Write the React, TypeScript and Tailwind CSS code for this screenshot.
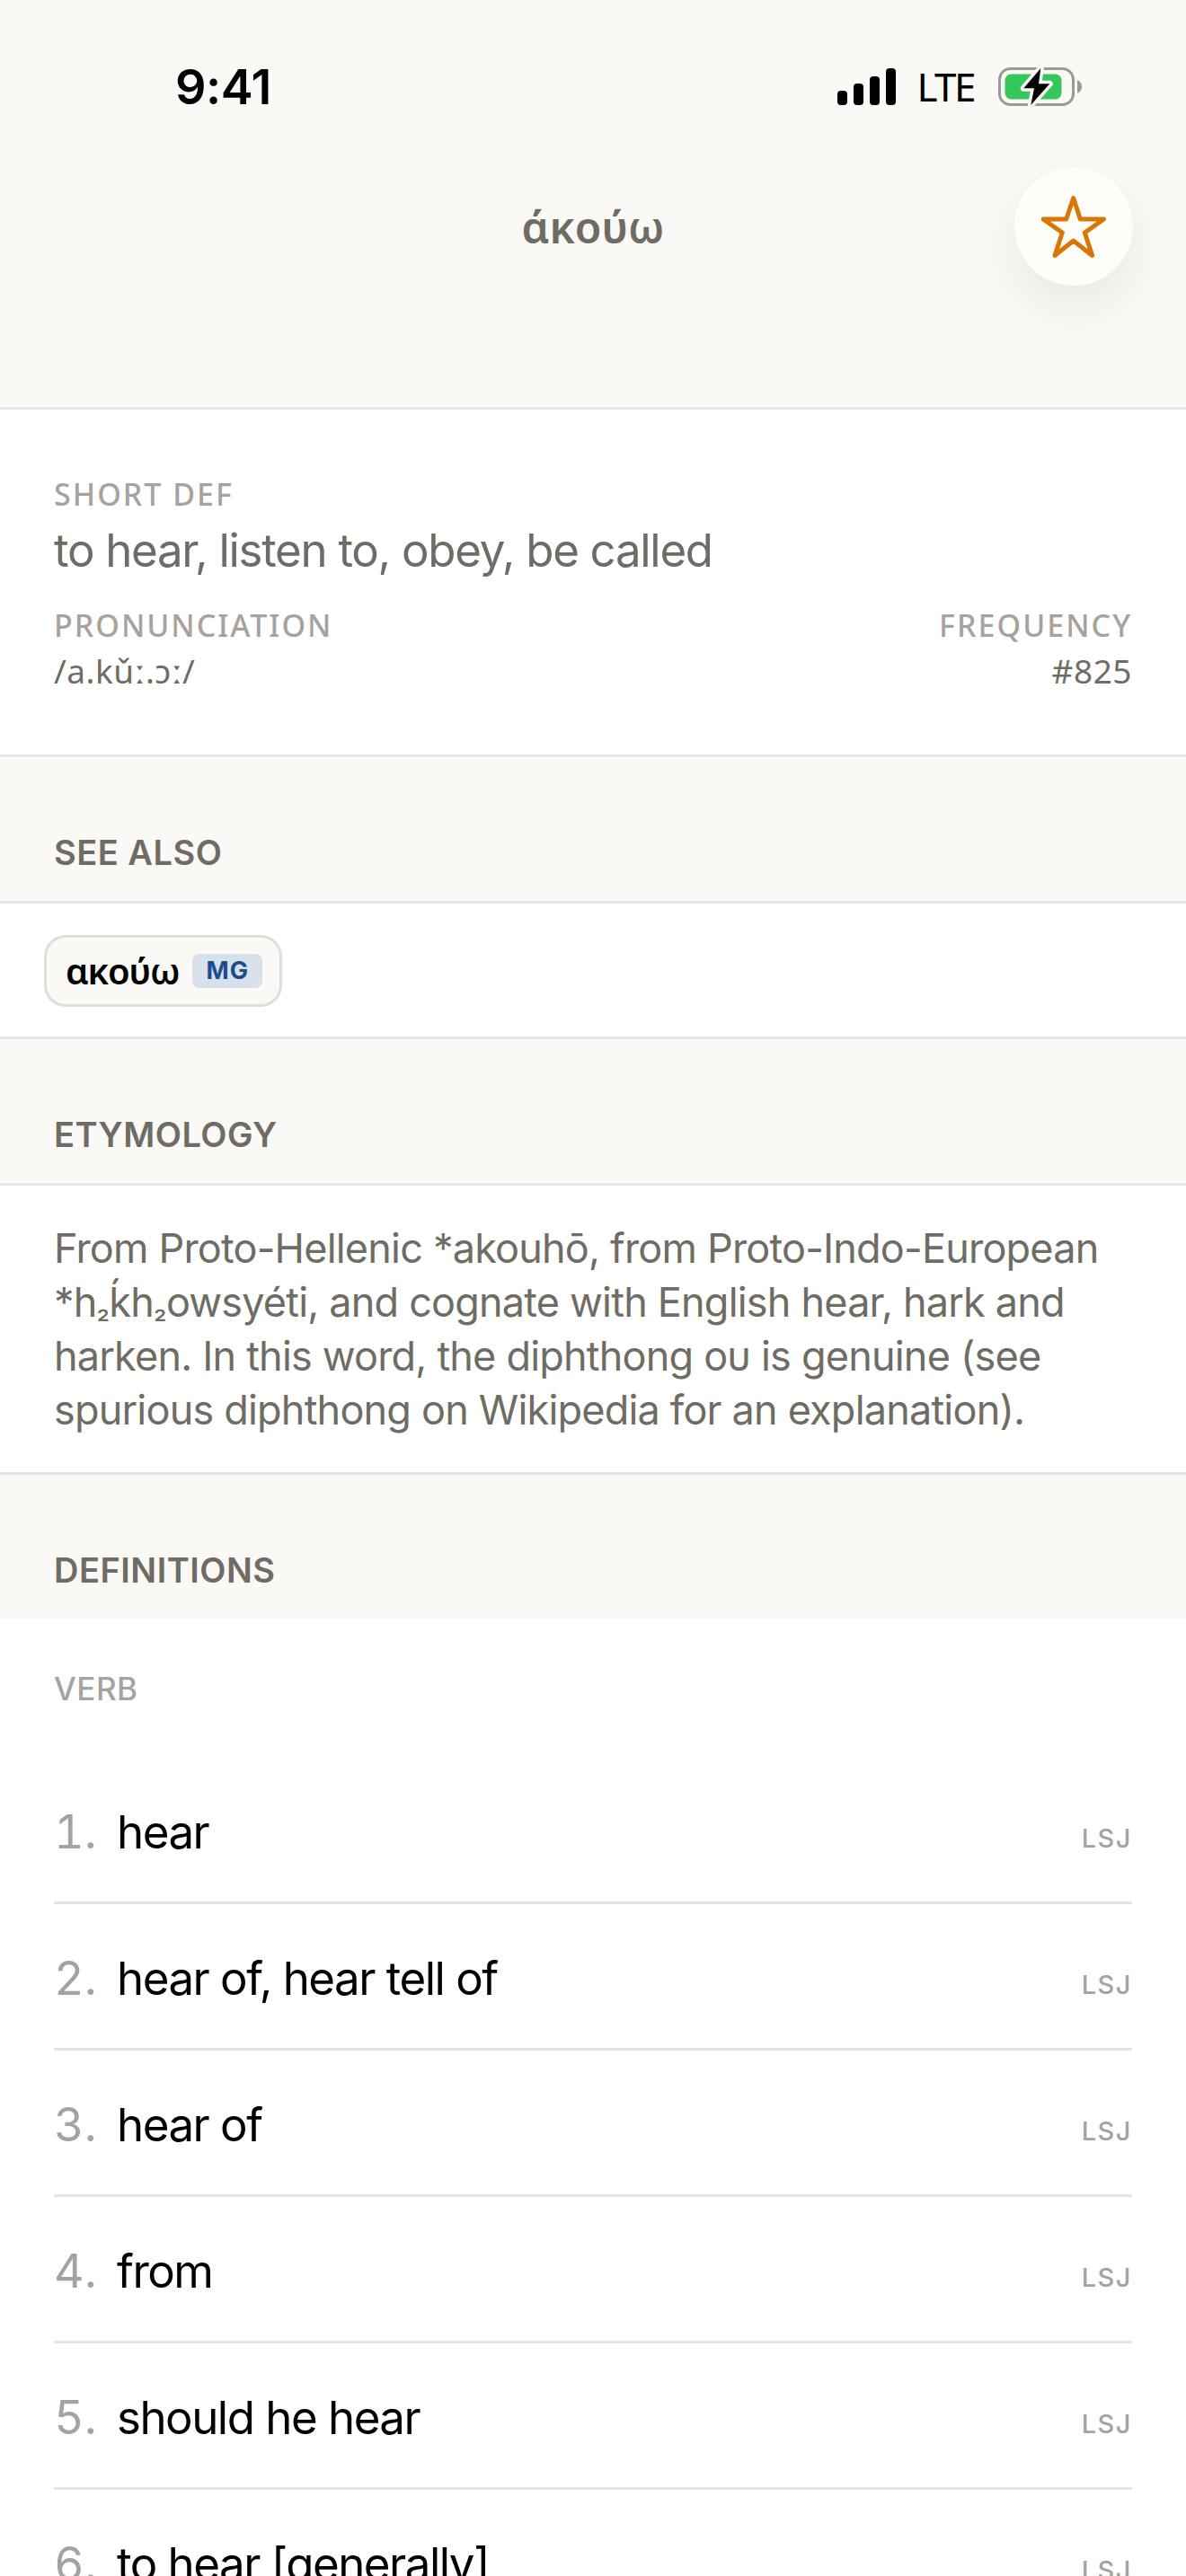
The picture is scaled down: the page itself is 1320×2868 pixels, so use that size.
import React from 'react';

const senses = ['hear', 'hear of, hear tell of', 'hear of', 'from', 'should he hear', 'to hear [generally]'];

const SignalIcon = () => (
  <svg width="65" height="41" viewBox="0 0 65 41" fill="#000">
    <rect x="0" y="25" width="11" height="16" rx="4" />
    <rect x="18" y="17" width="11" height="24" rx="4" />
    <rect x="36" y="9" width="11" height="32" rx="4" />
    <rect x="54" y="0" width="11" height="41" rx="4" />
  </svg>
);

const BatteryIcon = () => (
  <svg width="93" height="43" viewBox="0 0 93 43" fill="none">
    <rect x="1.5" y="1.5" width="82" height="40" rx="12" stroke="#9a9a98" strokeWidth="3" />
    <rect x="7.5" y="7.5" width="63" height="28" rx="7" fill="#34c759" />
    <path d="M88 14.5c3 .5 5 3 5 7s-2 6.5-5 7z" fill="#9a9a98" />
    <path
      d="M47.3 1 28.3 23.3H40L36.3 42 57.3 18.3H45z"
      stroke="#faf9f6"
      strokeWidth="7"
      strokeLinejoin="round"
      style={{ paintOrder: 'stroke' }}
      fill="#000"
    />
  </svg>
);

const StarIcon = () => (
  <svg width="72" height="69" viewBox="0 0 72 69" fill="none">
    <path
      d="M35.7 2.5 43.3 26H69.5L48.3 41 56.7 66.5 35.7 50 15 66.5 23.3 41 2 26H27.7z"
      stroke="#d97706"
      strokeWidth="5"
      strokeLinejoin="round"
    />
  </svg>
);

const SectionHeader = ({ title }: { title: string }) => (
  <div className="bg-[#faf9f6] px-[60px] pt-[83px] pb-[31px] text-[38px] leading-[46px] font-semibold tracking-[0.5px] text-[#6f6b65]">
    {title}
  </div>
);

const Label = ({ children }: { children: React.ReactNode }) => (
  <div className="text-[34px] leading-[44px] font-medium tracking-[2px] text-[#a8a29e] font-['Noto_Sans',sans-serif]">{children}</div>
);

const SubValue = ({ children }: { children: React.ReactNode }) => (
  <div className="mt-[4px] text-[37px] leading-[50px] tracking-[0.5px] text-[#6f6b65] font-['Noto_Sans',sans-serif]">{children}</div>
);

const Sub2 = () => <span className="text-[33px] leading-none">₂</span>;

export default function App() {
  return (
    <div className="w-[1320px] h-[2868px] overflow-hidden bg-white font-['Inter',sans-serif]">
      {/* Nav header */}
      <header className="relative h-[456px] bg-[#faf9f6] border-b-[3px] border-[#e7e5e4]">
        <div className="flex items-center justify-between pt-[75px] pl-[195px] pr-[116px]">
          <span className="text-[54px] leading-[43px] font-semibold tracking-[-0.5px] text-black">9:41</span>
          <div className="flex items-center">
            <SignalIcon />
            <span className="ml-[23px] mr-[27px] text-[44px] leading-[43px] tracking-[-2.5px] text-black font-['Noto_Sans',sans-serif]">LTE</span>
            <BatteryIcon />
          </div>
        </div>
        <h1 className="mt-[103px] text-center text-[48px] leading-[64px] font-semibold text-[#6f6b65] font-['Noto_Sans',sans-serif]">
          άκούω
        </h1>
        <button className="absolute left-[1129px] top-[186px] flex h-[132px] w-[132px] items-center justify-center rounded-full bg-[#fdfdfa] shadow-[0_24px_60px_rgba(0,0,0,0.07)]">
          <StarIcon />
        </button>
      </header>

      {/* Summary */}
      <section className="h-[387px] border-b-[3px] border-[#e7e5e4] px-[60px] pt-[72px]">
        <Label>SHORT DEF</Label>
        <div className="mt-[10px] text-[51px] leading-[62px] tracking-[-1.3px] text-[#6f6b65]">to hear, listen to, obey, be called</div>
        <div className="mt-[30px] flex justify-between">
          <div>
            <Label>PRONUNCIATION</Label>
            <SubValue>/a.kǔː.ɔː/</SubValue>
          </div>
          <div className="text-right">
            <Label>FREQUENCY</Label>
            <SubValue>#825</SubValue>
          </div>
        </div>
      </section>

      <SectionHeader title="SEE ALSO" />
      <section className="h-[154px] border-y-[3px] border-[#e7e5e4] px-[49px] pt-[35px]">
        <div className="inline-flex h-[80px] w-[265px] items-center gap-[15px] rounded-[24px] border-[3px] border-[#e0deda] bg-[#faf9f6] pl-[21px]">
          <span className="text-[40px] leading-[56px] font-semibold tracking-[-1.2px] text-black font-['Noto_Sans',sans-serif]">ακούω</span>
          <span className="rounded-[8px] bg-[#d8e0e9] px-[15px] text-[27px] leading-[38px] font-bold tracking-[1px] text-[#1a4c8f]">MG</span>
        </div>
      </section>

      <SectionHeader title="ETYMOLOGY" />
      <section className="h-[325px] border-y-[3px] border-[#e7e5e4] px-[60px] pt-[40px] text-[45px] leading-[60px] tracking-[-0.8px] whitespace-nowrap text-[#6f6b65]">
        <p>From Proto-Hellenic *akouhō, from Proto-Indo-European</p>
        <p>*h<Sub2 />ḱh<Sub2 />owsyéti, and cognate with English hear, hark and</p>
        <p>harken. In this word, the diphthong ου is genuine (see</p>
        <p>spurious diphthong on Wikipedia for an explanation).</p>
      </section>

      <SectionHeader title="DEFINITIONS" />

      {/* Definitions */}
      <section className="px-[60px] pt-[56px]">
        <div className="text-[35px] leading-[44px] font-medium tracking-[0.5px] text-[#a8a29e]">VERB</div>
        <ol className="mt-[55px]">
          {senses.map((sense, i) => (
            <li key={sense} className="flex h-[163px] items-center justify-between border-b-[3px] border-[#e7e5e4] pt-[5px]">
              <div className="flex items-baseline">
                <span className="w-[70px] text-[52px] tabular-nums text-[#a8a29e]">{i + 1}.</span>
                <span className="text-[51px] tracking-[-1.5px] text-black">{sense}</span>
              </div>
              <span className="mt-[14px] text-[29px] font-medium tracking-[1.5px] text-[#a8a29e]">LSJ</span>
            </li>
          ))}
        </ol>
      </section>
    </div>
  );
}
